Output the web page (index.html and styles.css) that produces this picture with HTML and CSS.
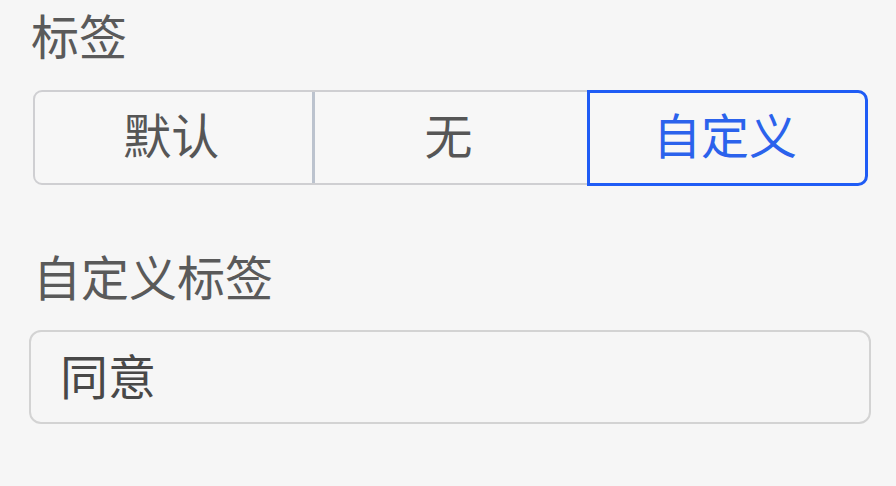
FILE: index.html
```html
<!DOCTYPE html>
<html lang="zh">
<head>
<meta charset="utf-8">
<link rel="stylesheet" href="styles.css">
</head>
<body>
<div class="panel">
  <div class="label">标签</div>
  <div class="segmented">
    <div class="seg">默认</div>
    <div class="seg seg-mid">无</div>
    <div class="seg seg-active">自定义</div>
  </div>
  <div class="label label-2">自定义标签</div>
  <div class="input">同意</div>
</div>
</body>
</html>
```

FILE: styles.css
```css
html, body {
  margin: 0;
  padding: 0;
  background: #f6f6f6;
  width: 896px;
  height: 486px;
  overflow: hidden;
}
.panel {
  font-family: "Noto Sans CJK SC", "Noto Sans", sans-serif;
  padding: 3px 25px 0 29px;
  display: flex;
  flex-direction: column;
}
.label {
  font-size: 48px;
  line-height: 62px;
  color: #5a5a5a;
  padding-left: 2px;
}
.segmented {
  margin: 25px 0 0 4px;
  width: 834px;
  height: 95px;
  box-sizing: border-box;
  display: grid;
  grid-template-columns: 276.5px 275px 1fr;
  border: 2.5px solid #cfcfd2;
  border-radius: 9px;
  background: #f7f7f7;
}
.seg {
  display: flex;
  align-items: center;
  justify-content: center;
  font-size: 48px;
  color: #565656;
  padding: 0 4px 9px 0;
}
.seg-mid {
  border-left: 3px solid #bcc3ce;
}
.seg-active {
  color: #2b62ec;
  margin: -2.5px -2.5px -2.5px 0;
  border: 3px solid #1f5cf5;
  border-radius: 0 10px 10px 0;
}
.label-2 {
  margin-top: 59px;
  padding-left: 4px;
}
.input {
  margin-top: 24px;
  height: 94px;
  box-sizing: border-box;
  border: 2.5px solid #d3d3d3;
  border-radius: 12px;
  font-size: 48px;
  color: #484848;
  display: flex;
  align-items: center;
  padding: 0 0 6px 29px;
}
```
